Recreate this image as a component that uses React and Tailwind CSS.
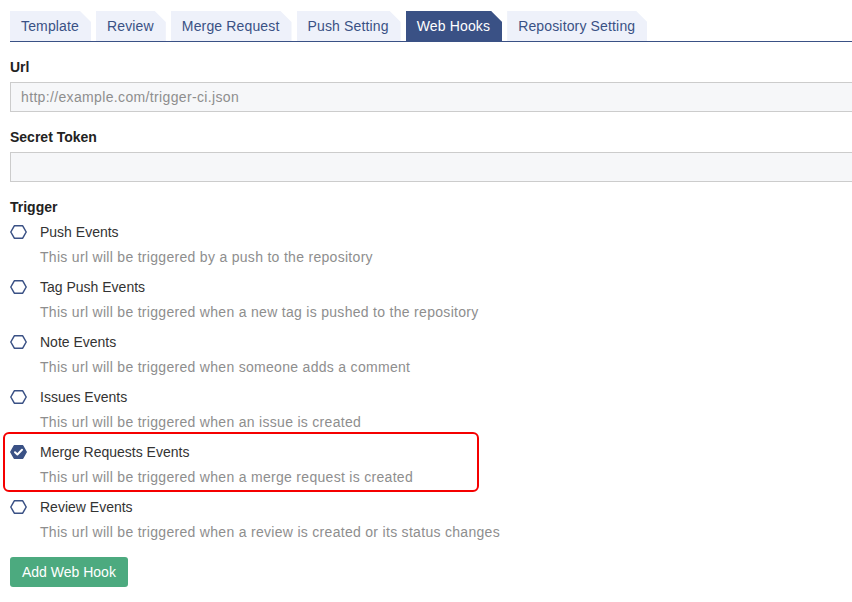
import React, { useState } from 'react';

const tabs = ['Template', 'Review', 'Merge Request', 'Push Setting', 'Web Hooks', 'Repository Setting'];

const triggers = [
  { name: 'Push Events', desc: 'This url will be triggered by a push to the repository' },
  { name: 'Tag Push Events', desc: 'This url will be triggered when a new tag is pushed to the repository' },
  { name: 'Note Events', desc: 'This url will be triggered when someone adds a comment' },
  { name: 'Issues Events', desc: 'This url will be triggered when an issue is created' },
  { name: 'Merge Requests Events', desc: 'This url will be triggered when a merge request is created', highlight: true },
  { name: 'Review Events', desc: 'This url will be triggered when a review is created or its status changes' },
];

function HexCheck({ checked }) {
  return (
    <svg width="17" height="14" viewBox="0 0 17 14" className="shrink-0">
      <polygon
        points="4.3,0.8 12.7,0.8 16.2,7 12.7,13.2 4.3,13.2 0.8,7"
        fill={checked ? '#3a5185' : 'none'}
        stroke="#3a5185"
        strokeWidth="1.5"
        strokeLinejoin="round"
      />
      {checked && (
        <path d="M5 7.2 L7.4 9.5 L12 4.8" fill="none" stroke="#fff" strokeWidth="2" strokeLinecap="round" strokeLinejoin="round" />
      )}
    </svg>
  );
}

export default function App() {
  const [active, setActive] = useState('Web Hooks');
  const [checked, setChecked] = useState({ 'Merge Requests Events': true });

  return (
    <div className="w-[852px] h-[602px] overflow-hidden bg-white pl-[10px] pt-[11px] text-[14px] font-['Liberation_Sans',Arial,sans-serif]">
      {/* tabs */}
      <div className="flex gap-[5px] border-b border-[#3a5185] w-[860px]">
        {tabs.map(t => (
          <button
            key={t}
            onClick={() => setActive(t)}
            className={`h-[30px] pl-[11px] pr-[12px] leading-[30px] tracking-[0.15px] [clip-path:polygon(0_0,calc(100%-11px)_0,100%_11px,100%_100%,0_100%)] ${
              active === t ? 'bg-[#3a5185] text-white' : 'bg-[#eef1fa] text-[#3a5185]'
            }`}
          >
            {t}
          </button>
        ))}
      </div>

      <div className="mt-[15px] font-bold text-[#222] leading-[20px]">Url</div>
      <input
        placeholder="http://example.com/trigger-ci.json"
        className="mt-[5px] block w-[860px] h-[30px] px-[10px] bg-[#f6f7f9] border border-[#ccc] text-[#333] tracking-[0.35px] placeholder:text-[#8e8e8e] outline-none"
      />

      <div className="mt-[15px] font-bold text-[#222] leading-[20px]">Secret Token</div>
      <input className="mt-[5px] block w-[860px] h-[30px] px-[10px] bg-[#f6f7f9] border border-[#ccc] outline-none" />

      <div className="mt-[15px] font-bold text-[#222] leading-[20px]">Trigger</div>
      <div className="mt-[5px] flex flex-col gap-[10px]">
        {triggers.map(tr => (
          <div key={tr.name} className="relative">
            {tr.highlight && (
              <div className="absolute left-[-7px] top-[-10px] w-[476px] h-[60px] border-2 border-[#f50000] rounded-[6px] pointer-events-none" />
            )}
            <div
              className="flex items-center gap-[13px] leading-[20px] text-[#333] cursor-pointer"
              onClick={() => setChecked(c => ({ ...c, [tr.name]: !c[tr.name] }))}
            >
              <HexCheck checked={!!checked[tr.name]} />
              <span>{tr.name}</span>
            </div>
            <div className="mt-[5px] pl-[30px] leading-[20px] text-[#8e8e8e] tracking-[0.3px]">{tr.desc}</div>
          </div>
        ))}
      </div>

      <button className="mt-[15px] h-[30px] px-[12px] rounded-[3px] bg-[#4caa7f] text-white leading-[30px]">
        Add Web Hook
      </button>
    </div>
  );
}
